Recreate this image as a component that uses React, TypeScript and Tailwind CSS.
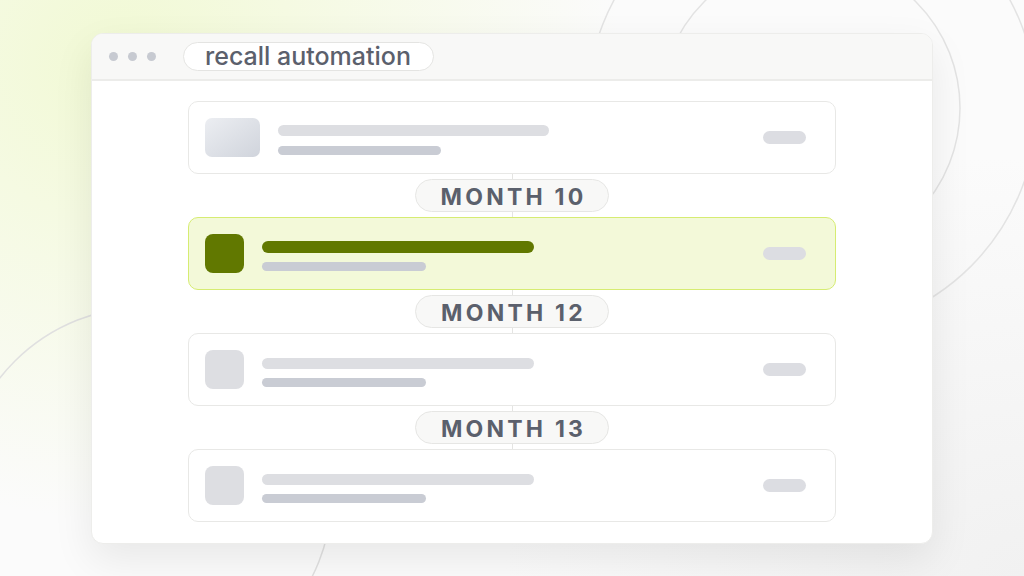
import React from "react";

function Connector({ label }: { label: string }) {
  return (
    <div className="flex flex-col items-center">
      <div className="w-px h-[5px] bg-[#e4e4e2]" />
      <div className="h-[33px] w-[194px] rounded-full border border-[#e6e6e4] bg-[#f8f8f7] flex items-center justify-center">
        <span className="text-[23px] font-bold tracking-[0.14em] text-[#5b606c] leading-none pl-[3px] mt-[3px]">
          {label}
        </span>
      </div>
      <div className="w-px h-[5px] bg-[#e4e4e2]" />
    </div>
  );
}

function Card({ variant }: { variant: "first" | "active" | "plain" }) {
  const active = variant === "active";
  return (
    <div
      className={
        active
          ? "h-[73px] rounded-[10px] border border-[#d6ec72] bg-[#f3f9d9] flex items-center pl-4 pr-[29px]"
          : "h-[73px] rounded-[10px] border border-[#e8e8e6] bg-white flex items-center pl-4 pr-[29px]"
      }
    >
      {variant === "first" ? (
        <div className="w-[55px] h-[39px] rounded-[7px] bg-gradient-to-br from-[#eceef2] to-[#d0d4dc]" />
      ) : (
        <div
          className={
            active
              ? "w-[39px] h-[39px] rounded-[8px] bg-[#617800]"
              : "w-[39px] h-[39px] rounded-[8px] bg-[#dddee2]"
          }
        />
      )}
      <div
        className={
          variant === "first"
            ? "flex flex-col gap-[10px] pt-[5px] ml-[18px]"
            : "flex flex-col gap-[9px] pt-[5px] ml-[18px]"
        }
      >
        <div
          className={
            variant === "first"
              ? "w-[271px] h-[11px] rounded-full bg-[#dddee2]"
              : active
              ? "w-[272px] h-[12px] rounded-full bg-[#617800]"
              : "w-[272px] h-[11px] rounded-full bg-[#dddee2]"
          }
        />
        <div
          className={
            variant === "first"
              ? "w-[163px] h-[9px] rounded-full bg-[#c9ccd4]"
              : "w-[164px] h-[9px] rounded-full bg-[#c9ccd4]"
          }
        />
      </div>
      <div className="ml-auto w-[43px] h-[13px] rounded-full bg-[#dcdde2]" />
    </div>
  );
}

export default function App() {
  return (
    <div className="relative w-[1024px] h-[576px] overflow-hidden bg-[#fbfbfb] font-['Inter','Liberation_Sans',sans-serif]">
      {/* background glows */}
      <div className="absolute inset-0 bg-[radial-gradient(ellipse_500px_460px_at_120px_60px,#f1f9d4_0%,#f5fae2_35%,rgba(251,251,251,0)_100%)]" />
      <div className="absolute inset-0 bg-[radial-gradient(ellipse_520px_420px_at_1024px_576px,#f1f1f1_0%,rgba(251,251,251,0)_100%)]" />
      <svg
        className="absolute inset-0"
        width="1024"
        height="576"
        viewBox="0 0 1024 576"
        fill="none"
      >
        <circle cx="810" cy="108" r="150" stroke="#e3e3e3" strokeWidth="1.5" />
        <circle cx="812" cy="107" r="225" stroke="#e3e3e3" strokeWidth="1.5" />
        <circle cx="146" cy="493" r="186" stroke="#e0e0e0" strokeWidth="1.5" />
      </svg>

      <div className="relative pt-[33px] pl-[91px]">
        <div className="w-[842px] h-[511px] rounded-[12px] bg-white border border-[#ededeb] shadow-[0_16px_40px_rgba(0,0,0,0.08)] overflow-hidden flex flex-col">
          {/* title bar */}
          <div className="h-[47px] shrink-0 bg-[#f8f8f7] border-b-2 border-[#ececea] flex items-center pl-[17px]">
            <div className="flex gap-[10px]">
              <div className="w-[9px] h-[9px] rounded-full bg-[#c7cad1]" />
              <div className="w-[9px] h-[9px] rounded-full bg-[#c7cad1]" />
              <div className="w-[9px] h-[9px] rounded-full bg-[#c7cad1]" />
            </div>
            <div className="ml-[27px] h-[29px] rounded-full border border-[#e4e4e2] bg-white flex items-center pl-[21px] pr-[22px]">
              <span className="text-[25px] font-medium text-[#5b606c] leading-none -mt-[1px]">
                recall automation
              </span>
            </div>
          </div>
          {/* content */}
          <div className="flex-1 pt-[20px] px-[96px] flex flex-col">
            <Card variant="first" />
            <Connector label="MONTH 10" />
            <Card variant="active" />
            <Connector label="MONTH 12" />
            <Card variant="plain" />
            <Connector label="MONTH 13" />
            <Card variant="plain" />
          </div>
        </div>
      </div>
    </div>
  );
}
